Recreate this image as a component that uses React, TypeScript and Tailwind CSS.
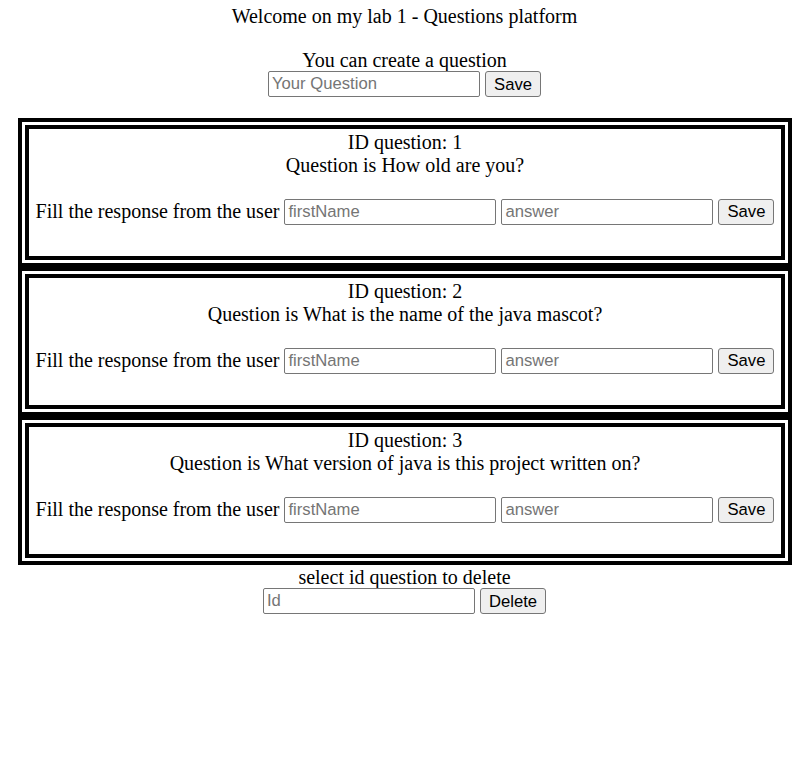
import React from 'react';

const QUESTIONS = [
    { id: 1, text: 'How old are you?' },
    { id: 2, text: 'What is the name of the java mascot?' },
    { id: 3, text: 'What version of java is this project written on?' },
];

const inputCls =
    "w-[212px] h-[26px] border border-[#767676] rounded-[2px] px-[3px] text-[16.67px] font-['Liberation_Sans',Arial,sans-serif] text-black placeholder:text-[#757575] bg-white outline-none";
const btnCls =
    "h-[26px] px-[8px] border border-[#767676] rounded-[3px] bg-[#efefef] text-[16.67px] font-['Liberation_Sans',Arial,sans-serif] text-black";

const App: React.FC = () => {
    return (
        <div className="min-h-screen bg-white text-black text-center text-[20px] leading-[23px] font-['Liberation_Serif','Times_New_Roman',serif]">
            {/* Header */}
            <div className="pt-[5px]">Welcome on my lab 1 - Questions platform</div>

            {/* Create question */}
            <div className="mt-[20px] pt-[1px] h-[23px]">You can create a question</div>
            <div className="flex justify-center gap-[5px]">
                <input className={inputCls} placeholder="Your Question" />
                <button className={btnCls}>Save</button>
            </div>

            {/* Questions list */}
            <div className="mt-[21px] ml-[18px] mr-[17px]">
                {QUESTIONS.map((q) => (
                    <div key={q.id} className="border-4 border-black p-[3px]">
                        <div className="border-4 border-black pt-[2px] pb-[31px]">
                            <div>ID question: {q.id}</div>
                            <div>Question is {q.text}</div>
                            <div className="h-[21px]" />
                            <div className="flex justify-center items-center gap-[5px] h-[27px]">
                                <span>Fill the response from the user</span>
                                <input className={inputCls} placeholder="firstName" />
                                <input className={inputCls} placeholder="answer" />
                                <button className={btnCls}>Save</button>
                            </div>
                        </div>
                    </div>
                ))}
            </div>

            {/* Delete question */}
            <div className="pt-[1px] h-[23px]">select id question to delete</div>
            <div className="flex justify-center gap-[5px]">
                <input className={inputCls} placeholder="Id" />
                <button className={btnCls}>Delete</button>
            </div>
        </div>
    );
};

export default App;
